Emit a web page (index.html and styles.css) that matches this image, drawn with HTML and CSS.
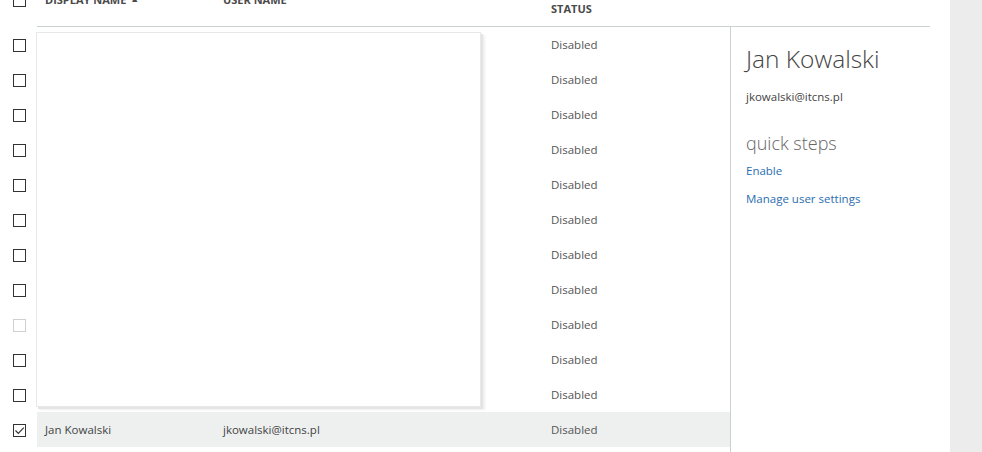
FILE: index.html
```html
<!DOCTYPE html>
<html>
<head>
<meta charset="utf-8">
<link rel="stylesheet" href="styles.css">
</head>
<body>
<div class="page">
  <div class="main">
    <div class="header">
      <div class="cb-col head-cb"><span class="cb"></span></div>
      <div class="hcells">
        <div class="hcell h-name">DISPLAY NAME <span class="sort">&#9650;</span></div>
        <div class="hcell h-user">USER NAME</div>
        <div class="hcell h-status">STATUS</div>
      </div>
    </div>
    <div class="body">
      <div class="list">
        <div class="row"><div class="cb-col"><span class="cb"></span></div><div class="cells"><div class="c-name"></div><div class="c-user"></div><div class="c-status">Disabled</div></div></div>
        <div class="row"><div class="cb-col"><span class="cb"></span></div><div class="cells"><div class="c-name"></div><div class="c-user"></div><div class="c-status">Disabled</div></div></div>
        <div class="row"><div class="cb-col"><span class="cb"></span></div><div class="cells"><div class="c-name"></div><div class="c-user"></div><div class="c-status">Disabled</div></div></div>
        <div class="row"><div class="cb-col"><span class="cb"></span></div><div class="cells"><div class="c-name"></div><div class="c-user"></div><div class="c-status">Disabled</div></div></div>
        <div class="row"><div class="cb-col"><span class="cb"></span></div><div class="cells"><div class="c-name"></div><div class="c-user"></div><div class="c-status">Disabled</div></div></div>
        <div class="row"><div class="cb-col"><span class="cb"></span></div><div class="cells"><div class="c-name"></div><div class="c-user"></div><div class="c-status">Disabled</div></div></div>
        <div class="row"><div class="cb-col"><span class="cb"></span></div><div class="cells"><div class="c-name"></div><div class="c-user"></div><div class="c-status">Disabled</div></div></div>
        <div class="row"><div class="cb-col"><span class="cb"></span></div><div class="cells"><div class="c-name"></div><div class="c-user"></div><div class="c-status">Disabled</div></div></div>
        <div class="row"><div class="cb-col"><span class="cb cb-light"></span></div><div class="cells"><div class="c-name"></div><div class="c-user"></div><div class="c-status">Disabled</div></div></div>
        <div class="row"><div class="cb-col"><span class="cb"></span></div><div class="cells"><div class="c-name"></div><div class="c-user"></div><div class="c-status">Disabled</div></div></div>
        <div class="row"><div class="cb-col"><span class="cb"></span></div><div class="cells"><div class="c-name"></div><div class="c-user"></div><div class="c-status">Disabled</div></div></div>
        <div class="row selected"><div class="cb-col"><span class="cb cb-checked"><svg width="11" height="11" viewBox="0 0 11 11"><path d="M1.5 5.5 L4.3 8.3 L9.8 2.6" fill="none" stroke="#333" stroke-width="1.2"/></svg></span></div><div class="cells"><div class="c-name">Jan Kowalski</div><div class="c-user">jkowalski@itcns.pl</div><div class="c-status">Disabled</div></div></div>
        <div class="overlay"></div>
      </div>
      <div class="details">
        <h1 class="d-name">Jan Kowalski</h1>
        <div class="d-email">jkowalski@itcns.pl</div>
        <h2 class="d-steps">quick steps</h2>
        <a class="d-link" href="#">Enable</a>
        <a class="d-link" href="#">Manage user settings</a>
      </div>
    </div>
  </div>
  <div class="rail"></div>
</div>
</body>
</html>
```

FILE: styles.css
```css
html, body {
  margin: 0;
  padding: 0;
  height: 100%;
  overflow: hidden;
  background: #ffffff;
}
body {
  font-family: "Open Sans", "Noto Sans", Arial, sans-serif;
  color: #444;
  font-size: 11.5px;
}
.page {
  display: flex;
  height: 100%;
}
.main {
  width: 950px;
  flex: none;
  margin-top: -20px;
}
.rail {
  flex: 1;
  background: #ececec;
}
.header {
  display: flex;
  height: 47px;
}
.cb-col {
  width: 37px;
  flex: none;
  box-sizing: border-box;
  padding-left: 13px;
  padding-top: 1px;
  display: flex;
  align-items: center;
}
.head-cb {
  align-items: flex-start;
  padding-top: 14px;
}
.hcells {
  width: 893px;
  display: flex;
  border-bottom: 1px solid #c9d1d1;
  box-sizing: border-box;
}
.hcell {
  font-size: 11px;
  font-weight: 700;
  color: #4a4a4a;
}
.h-name {
  width: 186px;
  padding-left: 8px;
  box-sizing: border-box;
  padding-top: 12px;
}
.sort {
  font-size: 9px;
  position: relative;
  top: -2px;
  margin-left: 1px;
}
.h-user {
  width: 328px;
  padding-top: 12px;
}
.h-status {
  padding-top: 21px;
}
.cb {
  display: block;
  width: 13px;
  height: 13px;
  box-sizing: border-box;
  border: 1px solid #333;
  background: #fff;
}
.cb-light {
  border-color: #d0d0d0;
}
.cb-checked svg {
  display: block;
}
.body {
  display: flex;
}
.list {
  width: 730px;
  position: relative;
}
.row {
  display: flex;
  height: 35px;
}
.cells {
  flex: 1;
  display: flex;
  align-items: center;
}
.selected .cells {
  background: #edf0ef;
}
.c-name {
  width: 186px;
  padding-left: 8px;
  box-sizing: border-box;
}
.c-user {
  width: 328px;
}
.c-status {
  color: #555;
}
.overlay {
  position: absolute;
  left: 36px;
  top: 5px;
  width: 445px;
  height: 375px;
  box-sizing: border-box;
  background: #fff;
  border: 1px solid #e8e8e8;
  box-shadow: 2px 2px 0 #e4e4e4, 4px 3px 2px #efefef;
}
.details {
  width: 200px;
  border-left: 1px solid #c9d1d1;
  padding-left: 15px;
  padding-top: 15px;
  min-height: 440px;
  box-sizing: border-box;
}
.d-name {
  margin: 0;
  font-weight: 300;
  font-size: 24.5px;
  color: #444;
  line-height: 34px;
}
.d-email {
  margin-top: 13px;
  font-size: 11.5px;
  color: #444;
}
.d-steps {
  margin: 27px 0 0;
  font-weight: 300;
  font-size: 18px;
  color: #666;
  line-height: 24px;
}
.d-link {
  display: block;
  color: #2a6db0;
  text-decoration: none;
  font-size: 11.5px;
  margin-top: 7px;
  line-height: 18px;
}
.d-link + .d-link {
  margin-top: 10px;
}
```
